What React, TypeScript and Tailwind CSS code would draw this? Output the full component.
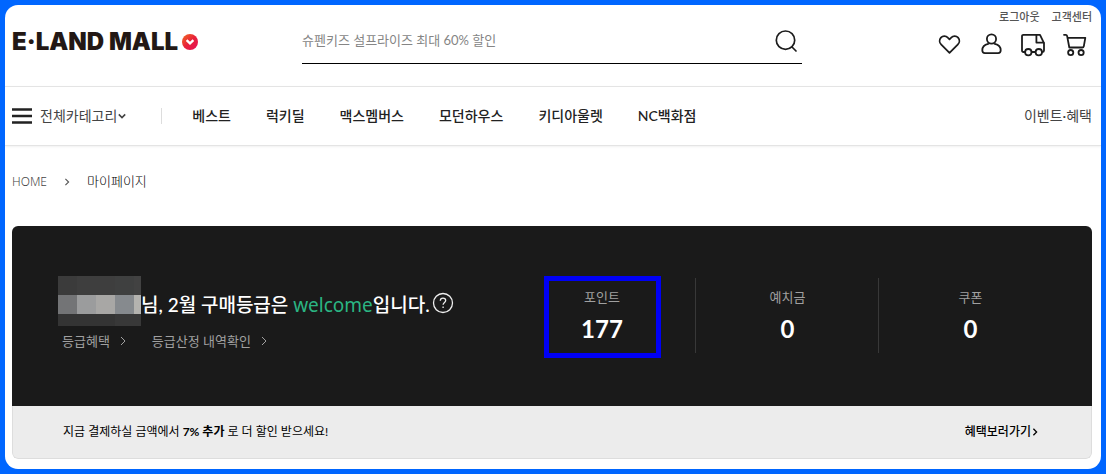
import React from "react";

const NAV_ITEMS = ["베스트", "럭키딜", "맥스멤버스", "모던하우스", "키디아울렛", "NC백화점"];

const STATS = [
  { label: "포인트", value: "177", highlighted: true },
  { label: "예치금", value: "0", highlighted: false },
  { label: "쿠폰", value: "0", highlighted: false },
];

const MASK_CELLS = [
  { x: 0, y: 0, w: 19, h: 19, fill: "#3b3b3b" },
  { x: 19, y: 0, w: 38, h: 19, fill: "#3e3e3e" },
  { x: 57, y: 0, w: 19, h: 19, fill: "#3f4040" },
  { x: 76, y: 0, w: 7, h: 19, fill: "#424242" },
  { x: 0, y: 19, w: 19, h: 19, fill: "#737476" },
  { x: 19, y: 19, w: 19, h: 19, fill: "#9b9c9d" },
  { x: 38, y: 19, w: 19, h: 19, fill: "#a8a7a5" },
  { x: 57, y: 19, w: 19, h: 19, fill: "#868a8e" },
  { x: 76, y: 19, w: 7, h: 19, fill: "#b4b3af" },
  { x: 0, y: 38, w: 57, h: 12, fill: "#343434" },
  { x: 57, y: 38, w: 26, h: 12, fill: "#383838" },
];

function Chevron({ className, direction = "right" }: { className: string; direction?: "right" | "down" }) {
  return (
    <svg viewBox="0 0 10 10" className={className} fill="none" stroke="currentColor" aria-hidden="true">
      <path d={direction === "right" ? "M3 1l4 4-4 4" : "M1 3l4 4 4-4"} />
    </svg>
  );
}

function Icon({ children }: { children: React.ReactNode }) {
  return (
    <svg
      viewBox="0 0 24 24"
      className="size-6"
      fill="none"
      stroke="#1c1c1c"
      strokeWidth="1.8"
      strokeLinecap="round"
      strokeLinejoin="round"
      aria-hidden="true"
    >
      {children}
    </svg>
  );
}

function Logo() {
  return (
    <a href="#" className="flex items-center gap-1 text-[#231815]">
      <span className="font-[Inter,sans-serif] text-[24px] leading-6 font-black whitespace-nowrap">E·LAND MALL</span>
      <svg viewBox="0 0 16 16" className="size-4" aria-hidden="true">
        <defs>
          <linearGradient id="logo-mark" x1="0" y1="0" x2="1" y2="1">
            <stop offset="0" stopColor="#f26a21" />
            <stop offset="0.5" stopColor="#e8213a" />
            <stop offset="1" stopColor="#e5105a" />
          </linearGradient>
        </defs>
        <circle cx="8" cy="8" r="8" fill="url(#logo-mark)" />
        <path d="M4.6 6.2L8 9.4l3.4-3.2" fill="none" stroke="#fff" strokeWidth="2.4" />
      </svg>
    </a>
  );
}

function Header() {
  return (
    <header className="grid h-[81px] grid-cols-[1fr_500px_1fr] pr-[9px] pl-[7px]">
      <div className="pt-[25px]">
        <Logo />
      </div>
      <form className="mt-[14px] flex h-[45px] items-center justify-between border-b border-black">
        <input
          type="text"
          aria-label="검색"
          placeholder="슈펜키즈 설프라이즈 최대 60% 할인"
          className="min-w-0 flex-1 bg-transparent text-[13px] outline-none placeholder:text-[#858585]"
        />
        <button type="button" aria-label="검색하기" className="mr-1">
          <svg viewBox="0 0 24 24" className="size-6" fill="none" stroke="#1c1c1c" strokeWidth="1.7" strokeLinecap="round">
            <circle cx="11.5" cy="11.2" r="9.2" />
            <path d="M18 18l4 4" />
          </svg>
        </button>
      </form>
      <div className="flex flex-col items-end pt-1">
        <div className="flex gap-3 text-[11px] leading-4 font-medium text-[#555]">
          <a href="#">로그아웃</a>
          <a href="#">고객센터</a>
        </div>
        <div className="mt-2 flex gap-[18px] pr-[5px]">
          <a href="#" aria-label="찜">
            <Icon>
              <path d="M12.5 19.8L4.300 11.700C2.300 9.700 2.100 6.600 3.900 4.600c1.900-2.100 5-2 6.900 0l1.700 1.700 1.700-1.700c1.900-2 5-2.100 6.900 0 1.800 2 1.600 5.100-.4 7.100z" />
            </Icon>
          </a>
          <a href="#" aria-label="마이페이지">
            <Icon>
              <circle cx="12.5" cy="6" r="4.600" />
              <path d="M9.200 10.900C5.500 11.700 3.300 14.300 3.300 17.300c0 1.900.9 2.800 2.600 2.800h13.200c1.700 0 2.600-.9 2.600-2.800 0-3-2.200-5.600-5.900-6.400" />
            </Icon>
          </a>
          <a href="#" aria-label="배송조회">
            <Icon>
              <path d="M3.800 19H2.400C1.600 19 1 18.400 1 17.600V3.200C1 2.400 1.600 1.800 2.400 1.800H19l4 8.400v7.300c0 .9-.6 1.500-1.500 1.500M10.800 19h3.400" />
              <path d="M15.400 2v7.600h7.200" />
              <circle cx="7.300" cy="19.200" r="3.200" />
              <circle cx="17.800" cy="19.200" r="3.200" />
            </Icon>
          </a>
          <a href="#" aria-label="장바구니">
            <Icon>
              <path d="M1 1.800h1.900c.8 0 1 .4 1.200 1.100L6.300 14.500h13c.9 0 1.300-.4 1.500-1.200L22.300 4.800H4.600" />
              <circle cx="7.700" cy="19.600" r="2.600" />
              <circle cx="18.100" cy="19.600" r="2.600" />
            </Icon>
          </a>
        </div>
      </div>
    </header>
  );
}

function Navigation() {
  return (
    <nav className="flex h-[60px] items-center border-y border-[#e4e4e4] pr-[9px] pb-px pl-[7px] text-[14px] shadow-[0_1px_2px_rgba(0,0,0,0.06)]">
      <button type="button" className="flex items-center text-[#444]">
        <svg viewBox="0 0 20 16" className="mr-2 h-4 w-5" stroke="#222" strokeWidth="2.4" aria-hidden="true">
          <path d="M0 1.500h20M0 8h20M0 14.500h20" />
        </svg>
        전체카테고리
        <Chevron direction="down" className="ml-px size-2 stroke-[2]" />
      </button>
      <span className="ml-[35px] h-4 w-px bg-[#ddd]" />
      <ul className="ml-[30px] flex gap-[35px] font-medium text-[#222]">
        {NAV_ITEMS.map((item) => (
          <li key={item}>
            <a href="#">{item}</a>
          </li>
        ))}
      </ul>
      <a href="#" className="ml-auto text-[#444]">
        이벤트·혜택
      </a>
    </nav>
  );
}

function Breadcrumb() {
  return (
    <nav aria-label="현재 위치" className="flex h-20 items-center pb-2 pl-[7px] text-[13px] text-black">
      <a href="#" className="font-['Noto_Sans',sans-serif] text-[12px] font-light text-[#444]">
        HOME
      </a>
      <Chevron className="mx-4 size-2 stroke-[1.4] text-[#555]" />
      <span className="font-light">마이페이지</span>
    </nav>
  );
}

function MembershipCard() {
  return (
    <section className="mr-[9px] ml-[7px] overflow-hidden rounded-md">
      <div className="flex h-[180px] items-start justify-between bg-[#1a1a1a] pr-[30px] pl-[46px]">
        <div className="pt-[50px]">
          <h1 className="flex items-start text-[19px] leading-[50px] font-medium whitespace-nowrap text-white">
            <svg viewBox="0 0 83 50" className="h-[50px] w-[83px]" shapeRendering="crispEdges" aria-hidden="true">
              {MASK_CELLS.map((cell) => (
                <rect key={`${cell.x}-${cell.y}`} x={cell.x} y={cell.y} width={cell.w} height={cell.h} fill={cell.fill} />
              ))}
            </svg>
            <span className="pt-1">
              님, 2월 구매등급은 <span className="font-['Noto_Sans',sans-serif] font-normal text-[#2bb583]">welcome</span>
              입니다.
            </span>
            <button type="button" aria-label="등급 안내" className="ml-[2px] self-center">
              <svg viewBox="0 0 22 22" className="size-[22px]" fill="none" stroke="#eee" strokeWidth="1.300">
                <circle cx="11" cy="11" r="9.500" />
                <path d="M8.300 8.800c0-1.600 1.100-2.700 2.700-2.700s2.700 1 2.700 2.400c0 1.900-2.600 2.200-2.600 4.300M11.100 14.500v1.600" />
              </svg>
            </button>
          </h1>
          <div className="flex gap-6 pl-1 text-[13px] leading-[22px] text-[#a0a0a0]">
            <a href="#" className="flex items-center gap-2">
              등급혜택
              <Chevron className="size-[10px]" />
            </a>
            <a href="#" className="flex items-center gap-2">
              등급산정 내역확인
              <Chevron className="size-[10px]" />
            </a>
          </div>
        </div>
        <dl className="grid grid-cols-[188px_183px_183px] pt-[50px]">
          {STATS.map((stat) => (
            <div key={stat.label} className="group relative flex justify-center">
              <div
                className={
                  stat.highlighted
                    ? "h-[82px] w-[117px] border-[5px] border-[#0000f5] pt-[5px] text-center"
                    : "h-[82px] w-[117px] border-[5px] border-transparent pt-[5px] text-center"
                }
              >
                <dt className="text-[13px] leading-[22px] text-[#a0a0a0]">{stat.label}</dt>
                <dd className="mt-[7px] text-[24px] leading-7 font-bold text-white">{stat.value}</dd>
              </div>
              <span className="absolute top-0.5 right-0 h-[75px] w-px bg-[#383838] group-last:hidden" />
            </div>
          ))}
        </dl>
      </div>
      <div className="flex h-[53px] items-center justify-between rounded-b-md border border-t-0 border-[#ddd] bg-[#ececec] pr-[52px] pl-[50px] text-[12px] text-black">
        <p>
          지금 결제하실 금액에서 <strong>7% 추가</strong> 로 더 할인 받으세요!
        </p>
        <a href="#" className="flex items-center font-medium">
          혜택보러가기
          <Chevron className="size-2 stroke-[1.600]" />
        </a>
      </div>
    </section>
  );
}

export default function App() {
  return (
    <div className="min-h-screen bg-[#0066ff] p-[5px] font-[Lato,'Noto_Sans_CJK_KR',sans-serif]">
      <main className="overflow-hidden rounded-[13px] bg-white pb-[10px]">
        <Header />
        <Navigation />
        <Breadcrumb />
        <MembershipCard />
      </main>
    </div>
  );
}
